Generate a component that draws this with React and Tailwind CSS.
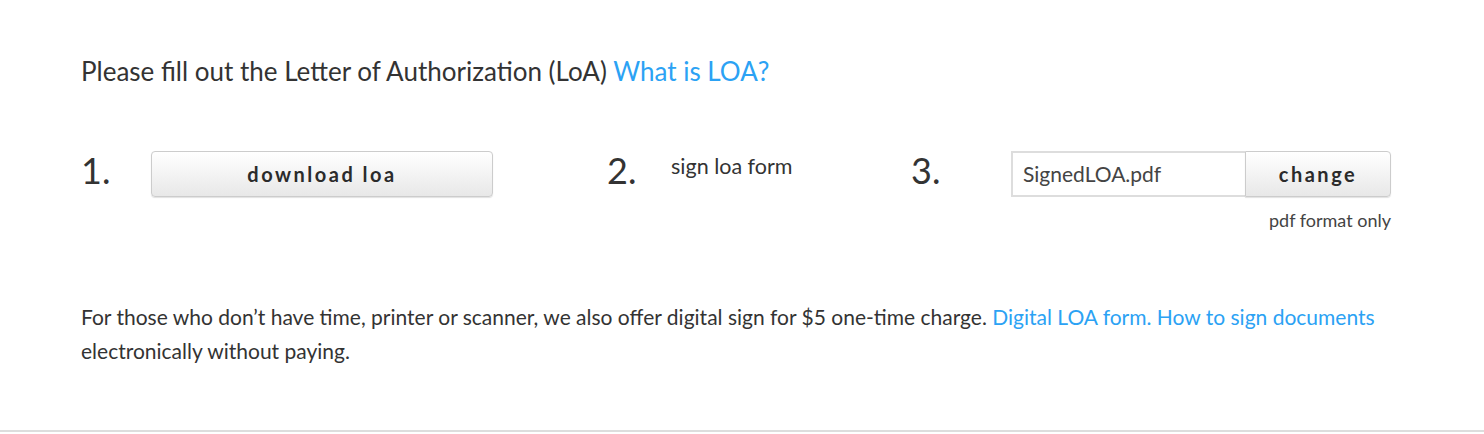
import React from 'react'

const font = { fontFamily: '"Source Sans Pro", Lato, "Noto Sans", sans-serif' }

export default function App() {
  return (
    <div className="w-[1484px] h-[432px] bg-white border-b-2 border-[#dddddd] text-[#333333]" style={font}>
      <div className="pl-[81px] pr-[93px] pt-[54px]">
        {/* title */}
        <p className="text-[26px] leading-[34px]">
          Please fill out the Letter of Authorization (LoA){' '}
          <a href="#" className="text-[#2ba2f4]">What is LOA?</a>
        </p>

        {/* steps */}
        <div className="flex mt-[63px] h-[90px]">
          <div className="flex w-[526px]">
            <span className="w-[70px] text-[36px] leading-[40px] -mt-[1px]">1.</span>
            <button className="w-[342px] h-[46px] rounded-[4px] border border-[#cccccc] bg-gradient-to-b from-white to-[#e8e8e8] shadow-[0_1px_1px_rgba(0,0,0,0.12)] text-[20px] font-bold tracking-[2.5px] text-[#2b2b2b]">
              download loa
            </button>
          </div>
          <div className="flex w-[304px]">
            <span className="w-[64px] text-[36px] leading-[40px] -mt-[1px]">2.</span>
            <span className="text-[21.5px] leading-[30px]">sign loa form</span>
          </div>
          <div className="flex">
            <span className="w-[100px] text-[36px] leading-[40px] -mt-[1px]">3.</span>
            <div className="flex flex-col items-end">
              <div className="flex h-[46px]">
                <div className="w-[234px] h-full border-2 border-r-0 border-[#dddddd] bg-white flex items-center pl-[10px] text-[21px] text-[#444444]">
                  SignedLOA.pdf
                </div>
                <button className="w-[146px] h-full rounded-r-[4px] border border-[#cccccc] bg-gradient-to-b from-white to-[#e8e8e8] shadow-[0_1px_1px_rgba(0,0,0,0.12)] text-[20px] font-bold tracking-[2.5px] text-[#2b2b2b]">
                  change
                </button>
              </div>
              <span className="mt-[11px] text-[18px] leading-[24px] text-[#444444]">pdf format only</span>
            </div>
          </div>
        </div>

        {/* bottom note */}
        <p className="mt-[59px] text-[21px] leading-[34px]">
          For those who don’t have time, printer or scanner, we also offer digital sign for $5 one-time charge.{' '}
          <a href="#" className="text-[#2ba2f4]">Digital LOA form. How to sign documents</a>{' '}
          electronically without paying.
        </p>
      </div>
    </div>
  )
}
